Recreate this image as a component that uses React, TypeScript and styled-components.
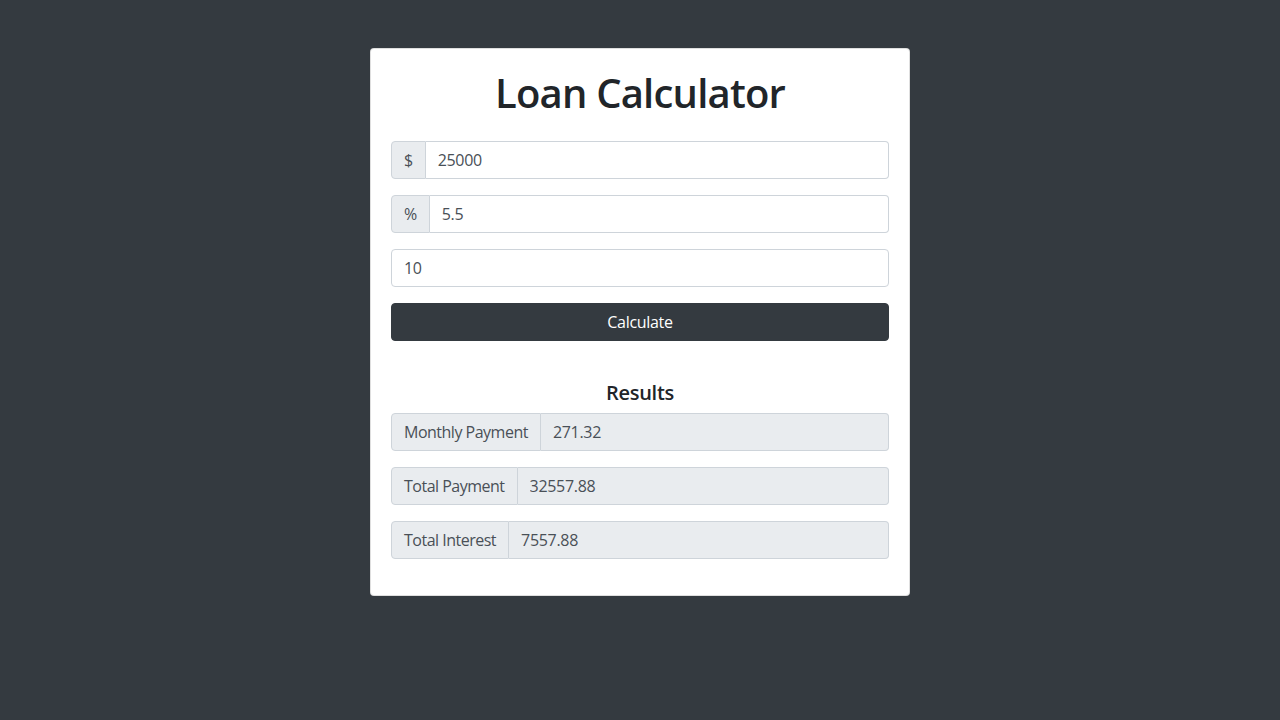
import React, { useState } from 'react';
import styled, { createGlobalStyle } from 'styled-components';

const GlobalStyle = createGlobalStyle`
  html, body {
    margin: 0;
    background: #343a40;
    font-family: "Open Sans", "Noto Sans", sans-serif;
    font-size: 16px;
    line-height: 1.5;
    color: #212529;
  }
  * { box-sizing: border-box; }
`;

const Page = styled.div`
  min-height: 720px;
  display: flex;
  justify-content: center;
  align-items: flex-start;
  padding-top: 48px;
`;

const Card = styled.div`
  width: 540px;
  background: #fff;
  border: 1px solid rgba(0, 0, 0, 0.125);
  border-radius: 4px;
  padding: 20px;
`;

const Title = styled.h1`
  margin: 0 0 24px;
  font-size: 40px;
  font-weight: 600;
  line-height: 1.2;
  letter-spacing: -0.8px;
  text-align: center;
`;

const Group = styled.div`
  display: flex;
  height: 38px;
  margin-bottom: 16px;
`;

const Addon = styled.span`
  display: flex;
  align-items: center;
  padding: 6px 12px;
  background: #e9ecef;
  border: 1px solid #ced4da;
  border-radius: 4px 0 0 4px;
  color: #495057;
  letter-spacing: -0.5px;
  white-space: nowrap;
`;

const Field = styled.input<{ $joined?: boolean; $readOnly?: boolean }>`
  flex: 1;
  min-width: 0;
  height: 38px;
  padding: 6px 12px;
  font: inherit;
  letter-spacing: -0.3px;
  color: #495057;
  background: ${(p) => (p.$readOnly ? '#e9ecef' : '#fff')};
  border: 1px solid #ced4da;
  border-left-width: ${(p) => (p.$joined ? '0' : '1px')};
  border-radius: ${(p) => (p.$joined ? '0 4px 4px 0' : '4px')};
  outline: none;
`;

const Button = styled.button`
  display: block;
  width: 100%;
  height: 38px;
  padding: 6px 12px;
  font: inherit;
  letter-spacing: -0.3px;
  color: #fff;
  background: #343a40;
  border: 1px solid #343a40;
  border-radius: 4px;
  cursor: pointer;
`;

const Results = styled.div`
  margin-top: 40px;
`;

const ResultsTitle = styled.h5`
  margin: 0 0 8px;
  font-size: 20px;
  font-weight: 600;
  line-height: 1.2;
  letter-spacing: -0.3px;
  text-align: center;
`;

export default function App() {
  const [amount, setAmount] = useState('25000');
  const [interest, setInterest] = useState('5.5');
  const [years, setYears] = useState('10');

  const results = [
    { label: 'Monthly Payment', value: '271.32' },
    { label: 'Total Payment', value: '32557.88' },
    { label: 'Total Interest', value: '7557.88' },
  ];

  return (
    <>
      <GlobalStyle />
      <Page>
        <Card>
          <Title>Loan Calculator</Title>
          <Group>
            <Addon>$</Addon>
            <Field $joined value={amount} onChange={(e) => setAmount(e.target.value)} />
          </Group>
          <Group>
            <Addon>%</Addon>
            <Field $joined value={interest} onChange={(e) => setInterest(e.target.value)} />
          </Group>
          <Group>
            <Field value={years} onChange={(e) => setYears(e.target.value)} />
          </Group>
          <Button>Calculate</Button>
          <Results>
            <ResultsTitle>Results</ResultsTitle>
            {results.map((r) => (
              <Group key={r.label}>
                <Addon>{r.label}</Addon>
                <Field $joined $readOnly readOnly value={r.value} />
              </Group>
            ))}
          </Results>
        </Card>
      </Page>
    </>
  );
}
